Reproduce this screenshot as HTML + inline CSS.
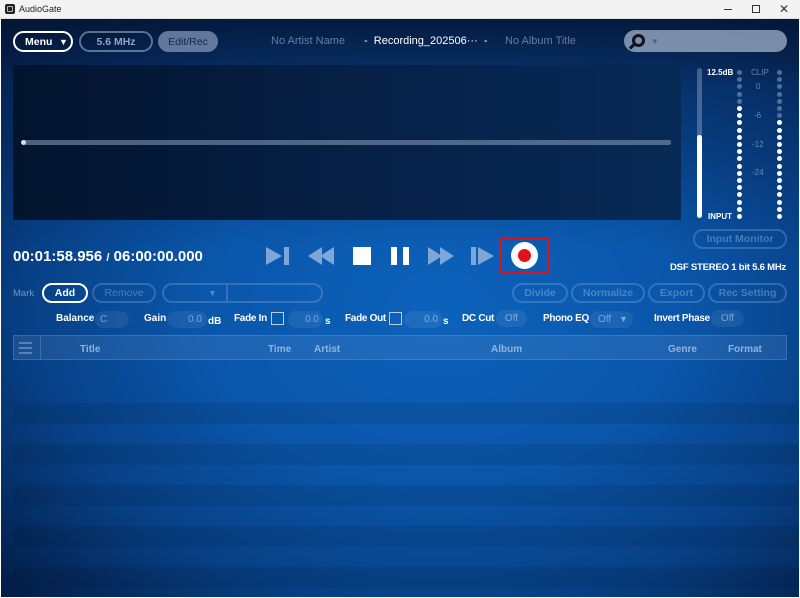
<!DOCTYPE html>
<html><head><meta charset="utf-8"><style>
*{margin:0;padding:0;box-sizing:border-box}
body{width:800px;height:598px;overflow:hidden;background:#fff;font-family:"Liberation Sans",sans-serif;position:relative}
.a{position:absolute;white-space:nowrap}
#main{left:1px;top:19px;width:798px;height:578px;overflow:hidden;
background:radial-gradient(ellipse 75% 75% at 55% 50%,#0c62bb 0%,#0a56aa 40%,#073f84 70%,#021a42 100%)}
#top{left:0;top:0;width:798px;height:230px;background:linear-gradient(180deg,rgba(4,20,50,.85) 0%,rgba(6,35,80,.5) 30%,rgba(8,50,110,0) 100%)}
.stripes{left:12px;top:364px;width:786px;height:240px;background:repeating-linear-gradient(180deg,rgba(0,0,0,0) 0 20px,rgba(0,0,0,.09) 20px 41px);}
.pill{position:absolute;border-radius:11px;font-size:10.5px;font-weight:bold;display:flex;align-items:center;justify-content:center;white-space:nowrap}
.ob{border:2px solid rgba(150,180,220,.3);color:rgba(170,195,225,.4)}
.lbl{position:absolute;color:#fff;font-size:10px;font-weight:bold;white-space:nowrap}
.fld{position:absolute;background:rgba(255,255,255,.07);border-radius:9px;color:rgba(190,210,235,.6);font-size:10px;height:17px;line-height:17px}
.dot{position:absolute;width:5px;height:5px;border-radius:50%}
.hd{position:absolute;color:rgba(170,200,235,.8);font-size:10px;font-weight:bold;top:344px}
</style></head><body>
<div class="a" style="left:0;top:0;width:800px;height:19px;background:#f3f3f3;border-bottom:1px solid #ddd"></div>
<div class="a" style="left:5px;top:4px;width:10px;height:10px;background:#222;border-radius:2px"></div>
<div class="a" style="left:7px;top:6px;width:6px;height:6px;border:1px solid #bbb;border-radius:1px"></div>
<div class="a" style="left:19px;top:4px;font-size:9px;color:#222">AudioGate</div>
<div class="a" style="left:724px;top:9px;width:8px;height:1px;background:#333"></div>
<div class="a" style="left:752px;top:5px;width:8px;height:8px;border:1px solid #333"></div>
<div class="a" style="left:779px;top:2px;font-size:12px;color:#333">✕</div>
<div id="main" class="a">
<div id="top" class="a"></div>
<div class="a stripes"></div>
</div>
<!-- header buttons -->
<div class="pill" style="left:13px;top:31px;width:60px;height:21px;border:2px solid #fff;color:#fff;justify-content:flex-start;padding-left:10px">Menu<span style="position:absolute;left:44px;font-size:9px">▼</span></div>
<div class="pill" style="left:79px;top:31px;width:74px;height:21px;border:2px solid rgba(180,200,230,.5);color:rgba(190,210,235,.75)">5.6 MHz</div>
<div class="pill" style="left:158px;top:31px;width:60px;height:21px;background:rgba(160,180,210,.6);color:#0c2a55;font-weight:normal">Edit/Rec</div>
<div class="a" style="left:271px;top:35px;font-size:11px;color:rgba(140,165,200,.7)">No Artist Name</div>
<div class="a" style="left:364px;top:35px;font-size:11px;color:#fff">-&nbsp; Recording_202506··· &nbsp;-</div>
<div class="a" style="left:505px;top:35px;font-size:11px;color:rgba(140,165,200,.7)">No Album Title</div>
<div class="a" style="left:624px;top:30px;width:163px;height:22px;border-radius:11px;background:rgba(200,215,235,.6)"></div>
<div class="a" style="left:632px;top:34px;width:13px;height:13px;border:3px solid #112;border-radius:50%"></div>
<div class="a" style="left:629px;top:45px;width:6px;height:3px;background:#112;transform:rotate(-45deg)"></div>
<div class="a" style="left:651px;top:37px;font-size:8px;color:rgba(60,80,110,.7)">▼</div>
<!-- waveform -->
<div class="a" style="left:13px;top:65px;width:668px;height:155px;background:linear-gradient(90deg,#03142e,#06224a 60%,#072a56)"></div>
<div class="a" style="left:22px;top:140px;width:649px;height:5px;background:rgba(140,160,190,.55);border-radius:2px"></div>
<div class="a" style="left:21px;top:140px;width:5px;height:5px;background:#ddd;border-radius:50%"></div>
<!-- meter -->
<div class="a" style="left:697px;top:68px;width:5px;height:150px;background:rgba(255,255,255,.25);border-radius:3px"></div>
<div class="a" style="left:697px;top:135px;width:5px;height:83px;background:#fff;border-radius:3px"></div>
<div class="a" style="left:707px;top:68px;font-size:8px;font-weight:bold;color:#fff">12.5dB</div>
<div class="a" style="left:708px;top:212px;font-size:8px;font-weight:bold;color:#fff">INPUT</div>
<div class="a" style="left:751px;top:68px;font-size:8px;color:rgba(150,170,200,.7)">CLIP</div>
<div class="a" style="left:756px;top:82px;font-size:8px;color:rgba(150,170,200,.7)">0</div>
<div class="a" style="left:754px;top:111px;font-size:8px;color:rgba(150,170,200,.7)">-6</div>
<div class="a" style="left:752px;top:140px;font-size:8px;color:rgba(150,170,200,.7)">-12</div>
<div class="a" style="left:752px;top:168px;font-size:8px;color:rgba(150,170,200,.7)">-24</div>
<div id="dots"></div>
<!-- time -->
<div class="a" style="left:13px;top:248px;font-size:15px;font-weight:bold;color:#fff">00:01:58.956 <span style="font-size:11px">/</span> 06:00:00.000</div>
<!-- transport -->
<svg class="a" style="left:260px;top:240px" width="240" height="32">
<g fill="#7ea6d8"><path d="M6 7 L22 16 L6 25Z"/><rect x="24" y="7" width="5" height="18"/>
<path d="M62 7 L48 16 L62 25Z"/><path d="M74 7 L60 16 L74 25Z"/>
<path d="M168 7 L182 16 L168 25Z"/><path d="M180 7 L194 16 L180 25Z"/>
<rect x="211" y="7" width="5" height="18"/><path d="M218 7 L234 16 L218 25Z"/></g>
<rect x="93" y="7" width="18" height="18" fill="#fff"/>
<rect x="131" y="7" width="6" height="18" fill="#fff"/><rect x="143" y="7" width="6" height="18" fill="#fff"/>
</svg>
<div class="a" style="left:500px;top:238px;width:49px;height:36px;border:2px solid #e0101c"></div>
<div class="a" style="left:511px;top:242px;width:27px;height:27px;border-radius:50%;background:#fff"></div>
<div class="a" style="left:518px;top:249px;width:13px;height:13px;border-radius:50%;background:#e5101a"></div>
<div class="pill ob" style="left:693px;top:229px;width:94px;height:20px">Input Monitor</div>
<div class="a" style="left:670px;top:262px;font-size:9.6px;font-weight:bold;color:#fff;letter-spacing:-0.25px">DSF STEREO 1 bit 5.6 MHz</div>
<!-- mark row -->
<div class="a" style="left:13px;top:288px;font-size:9.5px;color:rgba(160,185,220,.7)">Mark</div>
<div class="pill" style="left:42px;top:283px;width:46px;height:20px;border:2px solid #fff;color:#fff">Add</div>
<div class="pill ob" style="left:92px;top:283px;width:64px;height:20px;font-weight:normal">Remove</div>
<div class="pill ob" style="left:162px;top:283px;width:161px;height:20px"></div>
<div class="a" style="left:226px;top:285px;width:2px;height:16px;background:rgba(150,180,220,.3)"></div>
<div class="a" style="left:208px;top:288px;font-size:9px;color:rgba(170,195,225,.45)">▼</div>
<div class="pill ob" style="left:512px;top:283px;width:56px;height:20px">Divide</div>
<div class="pill ob" style="left:571px;top:283px;width:74px;height:20px">Normalize</div>
<div class="pill ob" style="left:648px;top:283px;width:57px;height:20px">Export</div>
<div class="pill ob" style="left:708px;top:283px;width:79px;height:20px">Rec Setting</div>
<!-- params -->
<div class="lbl" style="left:56px;top:313px">Balance</div><div class="fld" style="left:95px;top:311px;width:34px;padding-left:5px">C</div>
<div class="lbl" style="left:144px;top:313px">Gain</div><div class="fld" style="left:167px;top:311px;width:40px;text-align:right;padding-right:5px">0.0</div><div class="lbl" style="left:208px;top:316px">dB</div>
<div class="lbl" style="left:234px;top:313px;letter-spacing:-0.3px">Fade In</div><div class="a" style="left:271px;top:312px;width:13px;height:13px;border:1.5px solid #bcd"></div>
<div class="fld" style="left:288px;top:311px;width:35px;text-align:right;padding-right:4px">0.0</div><div class="lbl" style="left:325px;top:316px">s</div>
<div class="lbl" style="left:345px;top:313px;letter-spacing:-0.3px">Fade Out</div><div class="a" style="left:389px;top:312px;width:13px;height:13px;border:1.5px solid #bcd"></div>
<div class="fld" style="left:404px;top:311px;width:38px;text-align:right;padding-right:4px">0.0</div><div class="lbl" style="left:443px;top:316px">s</div>
<div class="lbl" style="left:462px;top:313px;letter-spacing:-0.3px">DC Cut</div><div class="fld" style="left:496px;top:310px;width:31px;text-align:center">Off</div>
<div class="lbl" style="left:543px;top:313px;letter-spacing:-0.3px">Phono EQ</div><div class="fld" style="left:590px;top:311px;width:43px;padding-left:8px">Off <span style="margin-left:5px;font-size:9px">▼</span></div>
<div class="lbl" style="left:654px;top:313px;letter-spacing:-0.3px">Invert Phase</div><div class="fld" style="left:711px;top:310px;width:33px;text-align:center">Off</div>
<!-- table header -->
<div class="a" style="left:13px;top:335px;width:774px;height:25px;background:rgba(120,160,210,.18);border:1px solid rgba(150,180,220,.25)"></div>
<div class="a" style="left:40px;top:336px;width:1px;height:23px;background:rgba(150,180,220,.3)"></div>
<div class="a" style="left:19px;top:342px;width:13px;height:2px;background:rgba(150,180,220,.5);box-shadow:0 5px 0 rgba(150,180,220,.5),0 10px 0 rgba(150,180,220,.5)"></div>
<div class="hd" style="left:80px">Title</div><div class="hd" style="left:268px">Time</div><div class="hd" style="left:314px">Artist</div>
<div class="hd" style="left:491px">Album</div><div class="hd" style="left:668px">Genre</div><div class="hd" style="left:728px">Format</div>
<script>
var h='';for(var i=0;i<21;i++){var y=70+i*7.2;
h+='<div class="dot" style="left:737px;top:'+y+'px;background:'+(i<5?'rgba(170,190,220,.45)':'#fff')+'"></div>';
h+='<div class="dot" style="left:777px;top:'+y+'px;background:'+(i<7?'rgba(170,190,220,.45)':'#fff')+'"></div>';}
document.getElementById('dots').outerHTML=h;
</script>
</body></html>
